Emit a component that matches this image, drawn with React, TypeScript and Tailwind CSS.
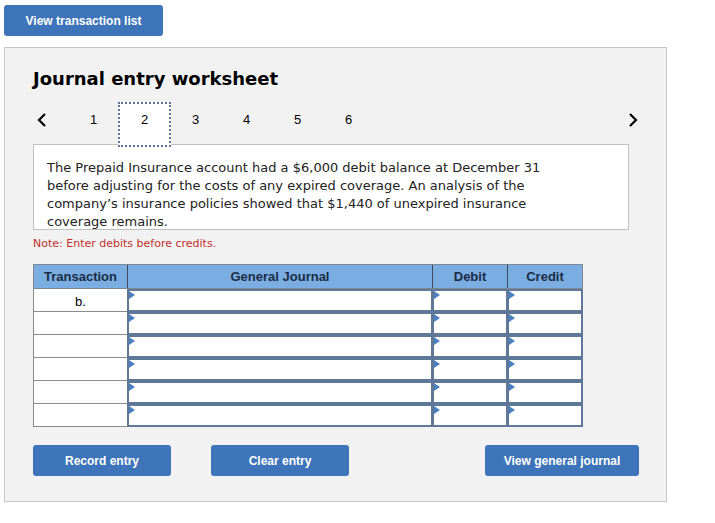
import React from "react";

const Tri = () => (
  <svg className="absolute left-0 top-0" width="6" height="8" viewBox="0 0 6 8">
    <polygon points="0,0 6,4 0,8" fill="#4a7fc2" />
  </svg>
);

const InputCell = ({ w }: { w: string }) => (
  <div className={`relative ${w} h-[23px] border-2 border-[#5f7898] bg-white -ml-px`}>
    <Tri />
  </div>
);

export default function App() {
  const rows = ["b.", "", "", "", "", ""];
  const btn =
    "h-[31px] rounded-[3px] bg-[#3d74ba] text-white text-[12px] font-bold flex items-center justify-center";
  return (
    <div className="w-[715px] h-[523px] bg-white" style={{ fontFamily: '"Liberation Sans", Arial, sans-serif' }}>
      <div className="pt-[5px] pl-[4px]">
        <button className={`${btn} w-[159px]`}>View transaction list</button>
      </div>
      <div className="ml-[4px] mt-[11px] w-[663px] h-[455px] border border-[#c8c8c8] bg-[#f2f2f2] pl-[28px]">
        <div
          className="mt-[20px] text-[18px] font-bold text-black leading-[22px]"
          style={{ fontFamily: '"DejaVu Sans", Verdana, sans-serif' }}
        >
          Journal entry worksheet
        </div>
        <div className="mt-[12px] flex items-start h-[42px] w-[607px] relative">
          <div className="w-[34px] h-[35px] flex items-center pl-[4px]">
            <svg width="10" height="14" viewBox="0 0 10 14">
              <polyline points="8,1 2,7 8,13" fill="none" stroke="#000" strokeWidth="2.2" />
            </svg>
          </div>
          <div className="w-[1px]" />
          {[1, 2, 3, 4, 5, 6].map((n) =>
            n === 2 ? (
              <div
                key={n}
                className="relative z-10 -mx-px w-[53px] h-[45px] bg-white border-2 border-dotted border-[#5a7396] flex justify-center pt-[6px] text-[13px] text-black"
              >
                {n}
              </div>
            ) : (
              <div key={n} className="w-[51px] h-[35px] flex items-center justify-center text-[13px] text-black">
                {n}
              </div>
            )
          )}
          <div className="flex-1" />
          <div className="w-[12px] h-[35px] flex items-center">
            <svg width="10" height="14" viewBox="0 0 10 14">
              <polyline points="2,1 8,7 2,13" fill="none" stroke="#000" strokeWidth="2.2" />
            </svg>
          </div>
        </div>
        <div
          className="w-[596px] h-[86px] bg-white border border-[#c0c0c0] pl-[13px] pt-[14px] text-[13px] leading-[18px] text-[#222]"
          style={{ fontFamily: '"DejaVu Sans", Verdana, sans-serif' }}
        >
          The Prepaid Insurance account had a $6,000 debit balance at December 31
          <br />
          before adjusting for the costs of any expired coverage. An analysis of the
          <br />
          company’s insurance policies showed that $1,440 of unexpired insurance
          <br />
          coverage remains.
        </div>
        <div
          className="mt-[7px] text-[11px] leading-[14px] text-[#c0302b]"
          style={{ fontFamily: '"DejaVu Sans", Verdana, sans-serif' }}
        >
          Note: Enter debits before credits.
        </div>
        <div className="mt-[13px] w-[550px]">
          <div className="flex h-[25px] bg-[#7aaee3] border border-[#7f8790] text-[13px] font-bold text-[#1c2c45]">
            <div className="w-[94px] flex items-center justify-center border-r border-[#3d4a5a]">Transaction</div>
            <div className="w-[305px] flex items-center justify-center border-r border-[#3d4a5a]">General Journal</div>
            <div className="w-[75px] flex items-center justify-center border-r border-[#3d4a5a]">Debit</div>
            <div className="flex-1 flex items-center justify-center">Credit</div>
          </div>
          {rows.map((r, i) => (
            <div key={i} className="flex h-[23px]">
              <div className="w-[95px] h-[23px] bg-white border border-t-0 border-[#8a8a8a] flex justify-center pt-[3px] text-[13px] text-black">
                {r}
              </div>
              <InputCell w="w-[306px]" />
              <InputCell w="w-[76px]" />
              <InputCell w="w-[76px]" />
            </div>
          ))}
        </div>
        <div className="mt-[18px] flex w-[606px]">
          <button className={`${btn} w-[138px]`}>Record entry</button>
          <button className={`${btn} w-[138px] ml-[40px]`}>Clear entry</button>
          <div className="flex-1" />
          <button className={`${btn} w-[154px]`}>View general journal</button>
        </div>
      </div>
    </div>
  );
}
